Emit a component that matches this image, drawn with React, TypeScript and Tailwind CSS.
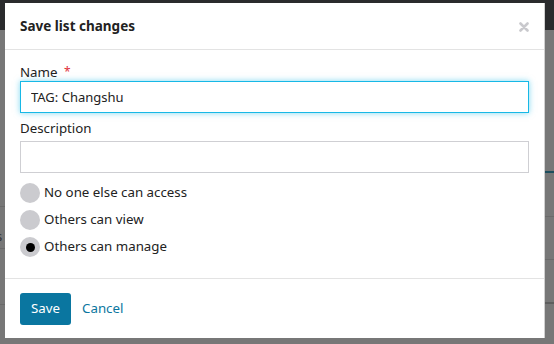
import { useState } from 'react';

const font = { fontFamily: '"Noto Sans", "Open Sans", sans-serif' };

function Radio({ label, checked }: { label: string; checked?: boolean }) {
  return (
    <label className="flex items-center gap-[4px] h-[26px] text-[13.3px] text-[#222]">
      <span className="w-[20px] h-[20px] rounded-full bg-[#cbcbcf] flex items-center justify-center">
        {checked && <span className="w-[9px] h-[9px] rounded-full bg-black" />}
      </span>
      {label}
    </label>
  );
}

export default function App() {
  const [name, setName] = useState('TAG: Changshu');
  const [desc, setDesc] = useState('');

  return (
    <div className="relative w-[554px] h-[344px] overflow-hidden bg-[#777777]" style={font}>
      {/* page behind the overlay */}
      <div className="h-[30px] bg-[#2a2b2d]" />
      <div className="flex justify-between">
        <div className="w-[5px] flex flex-col">
          <div className="h-[177px] border-b border-[#6a6a6a]" />
          <div className="h-[41px] text-[13px] text-[#333] leading-[18px] pt-[20px] -ml-[4px]">s</div>
          <div className="h-[57px] border-t border-[#6a6a6a] border-b" />
        </div>
        <div className="w-[10px] flex flex-col">
          <div className="h-[143px] border-b-2 border-[#1d4e5e]" />
          <div className="h-[44px] border-b border-[#6a6a6a]" />
          <div className="h-[43px] border-b border-[#6a6a6a]" />
          <div className="h-[44px] border-b-2 border-[#5e5e5e]" />
        </div>
      </div>

      {/* modal */}
      <div className="absolute left-[5px] top-[3px] w-[539px] h-[335px] bg-white shadow-[1px_0_0_#d0d0d0] flex flex-col">
        <div className="shrink-0 h-[47px] px-[15px] flex items-center justify-between border-b border-[#e3e3e3]">
          <h3 className="text-[13.5px] font-bold text-[#222]">Save list changes</h3>
          <svg width="10" height="10" viewBox="0 0 10 10" className="mt-[2px]">
            <path d="M1.5 1.5 L8.5 8.5 M8.5 1.5 L1.5 8.5" stroke="#c9c9cd" strokeWidth="2.6" strokeLinecap="round" />
          </svg>
        </div>

        <div className="shrink-0 px-[15px] pt-[13px] flex flex-col">
          <label className="text-[13.3px] text-[#222] leading-[18px]">
            Name <span className="text-[#e0303a] text-[12px] align-top ml-[3px]">*</span>
          </label>
          <input
            value={name}
            onChange={e => setName(e.target.value)}
            className="h-[32px] px-[10px] text-[13px] text-[#222] border border-[#17b8e6] shadow-[0_0_6px_rgba(23,184,230,0.55)] outline-none"
          />
          <label className="text-[13.3px] text-[#222] leading-[18px] mt-[6px] mb-[4px]">Description</label>
          <input
            value={desc}
            onChange={e => setDesc(e.target.value)}
            className="h-[32px] px-[10px] text-[13px] border border-[#cfcfd3] outline-none"
          />
          <div className="flex flex-col mt-[7px] gap-[1px]">
            <Radio label="No one else can access" />
            <Radio label="Others can view" />
            <Radio label="Others can manage" checked />
          </div>
        </div>

        <div className="shrink-0 mt-auto border-t border-[#e3e3e3] px-[15px] pt-[14px] pb-[13px] flex items-center gap-[11px]">
          <button className="h-[32px] px-[11px] rounded-[3px] bg-[#0a76a0] text-white text-[13.3px]">Save</button>
          <a className="text-[13.3px] text-[#0a76a0]">Cancel</a>
        </div>
      </div>
    </div>
  );
}
